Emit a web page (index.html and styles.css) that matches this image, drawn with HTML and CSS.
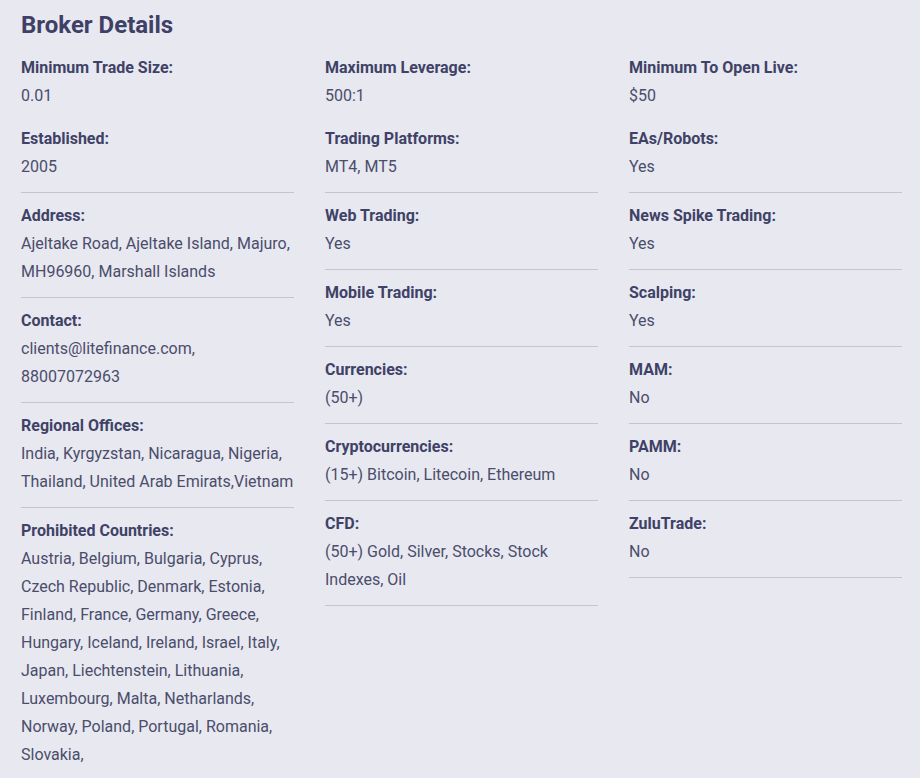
FILE: index.html
```html
<!DOCTYPE html>
<html lang="en">
<head>
<meta charset="utf-8">
<title>Broker Details</title>
<link rel="stylesheet" href="styles.css">
</head>
<body>
<section class="broker">
  <h2 class="title">Broker Details</h2>
  <div class="grid">
    <div class="col">
      <div class="item first">
        <div class="label">Minimum Trade Size:</div>
        <div class="value">0.01</div>
      </div>
      <div class="item">
        <div class="label">Established:</div>
        <div class="value">2005</div>
      </div>
      <div class="item">
        <div class="label">Address:</div>
        <div class="value">Ajeltake Road, Ajeltake Island, Majuro, MH96960, Marshall Islands</div>
      </div>
      <div class="item">
        <div class="label">Contact:</div>
        <div class="value">clients@litefinance.com, 88007072963</div>
      </div>
      <div class="item">
        <div class="label">Regional Offices:</div>
        <div class="value">India, Kyrgyzstan, Nicaragua, Nigeria, Thailand, United Arab Emirats,Vietnam</div>
      </div>
      <div class="item">
        <div class="label">Prohibited Countries:</div>
        <div class="value">Austria, Belgium, Bulgaria, Cyprus, Czech Republic, Denmark, Estonia, Finland, France, Germany, Greece, Hungary, Iceland, Ireland, Israel, Italy, Japan, Liechtenstein, Lithuania, Luxembourg, Malta, Netharlands, Norway, Poland, Portugal, Romania, Slovakia,</div>
      </div>
    </div>
    <div class="col">
      <div class="item first">
        <div class="label">Maximum Leverage:</div>
        <div class="value">500:1</div>
      </div>
      <div class="item">
        <div class="label">Trading Platforms:</div>
        <div class="value">MT4, MT5</div>
      </div>
      <div class="item">
        <div class="label">Web Trading:</div>
        <div class="value">Yes</div>
      </div>
      <div class="item">
        <div class="label">Mobile Trading:</div>
        <div class="value">Yes</div>
      </div>
      <div class="item">
        <div class="label">Currencies:</div>
        <div class="value">(50+)</div>
      </div>
      <div class="item">
        <div class="label">Cryptocurrencies:</div>
        <div class="value">(15+) Bitcoin, Litecoin, Ethereum</div>
      </div>
      <div class="item">
        <div class="label">CFD:</div>
        <div class="value">(50+) Gold, Silver, Stocks, Stock Indexes, Oil</div>
      </div>
    </div>
    <div class="col">
      <div class="item first">
        <div class="label">Minimum To Open Live:</div>
        <div class="value">$50</div>
      </div>
      <div class="item">
        <div class="label">EAs/Robots:</div>
        <div class="value">Yes</div>
      </div>
      <div class="item">
        <div class="label">News Spike Trading:</div>
        <div class="value">Yes</div>
      </div>
      <div class="item">
        <div class="label">Scalping:</div>
        <div class="value">Yes</div>
      </div>
      <div class="item">
        <div class="label">MAM:</div>
        <div class="value">No</div>
      </div>
      <div class="item">
        <div class="label">PAMM:</div>
        <div class="value">No</div>
      </div>
      <div class="item">
        <div class="label">ZuluTrade:</div>
        <div class="value">No</div>
      </div>
    </div>
  </div>
</section>
</body>
</html>
```
FILE: styles.css
```css
html, body {
  margin: 0;
  padding: 0;
  background: #e7e8f0;
}
body {
  font-family: Roboto, "Liberation Sans", Arial, sans-serif;
  color: #4a4c6b;
}
.broker {
  padding: 11px 18px 0 21px;
}
.title {
  margin: 0 0 14px;
  font-size: 24px;
  line-height: 29px;
  font-weight: 700;
  color: #3e4066;
}
.grid {
  display: grid;
  grid-template-columns: repeat(3, 273px);
  column-gap: 31px;
  align-items: start;
}
.item {
  padding: 9px 0 11px;
  border-bottom: 1px solid #c6c6ca;
}
.item.first {
  padding: 0 0 6px;
  border-bottom: none;
}
.label {
  font-size: 16px;
  line-height: 28px;
  font-weight: 700;
  color: #3f4266;
}
.value {
  font-size: 16px;
  line-height: 28px;
  font-weight: 400;
  color: #4b4d6b;
}
```
